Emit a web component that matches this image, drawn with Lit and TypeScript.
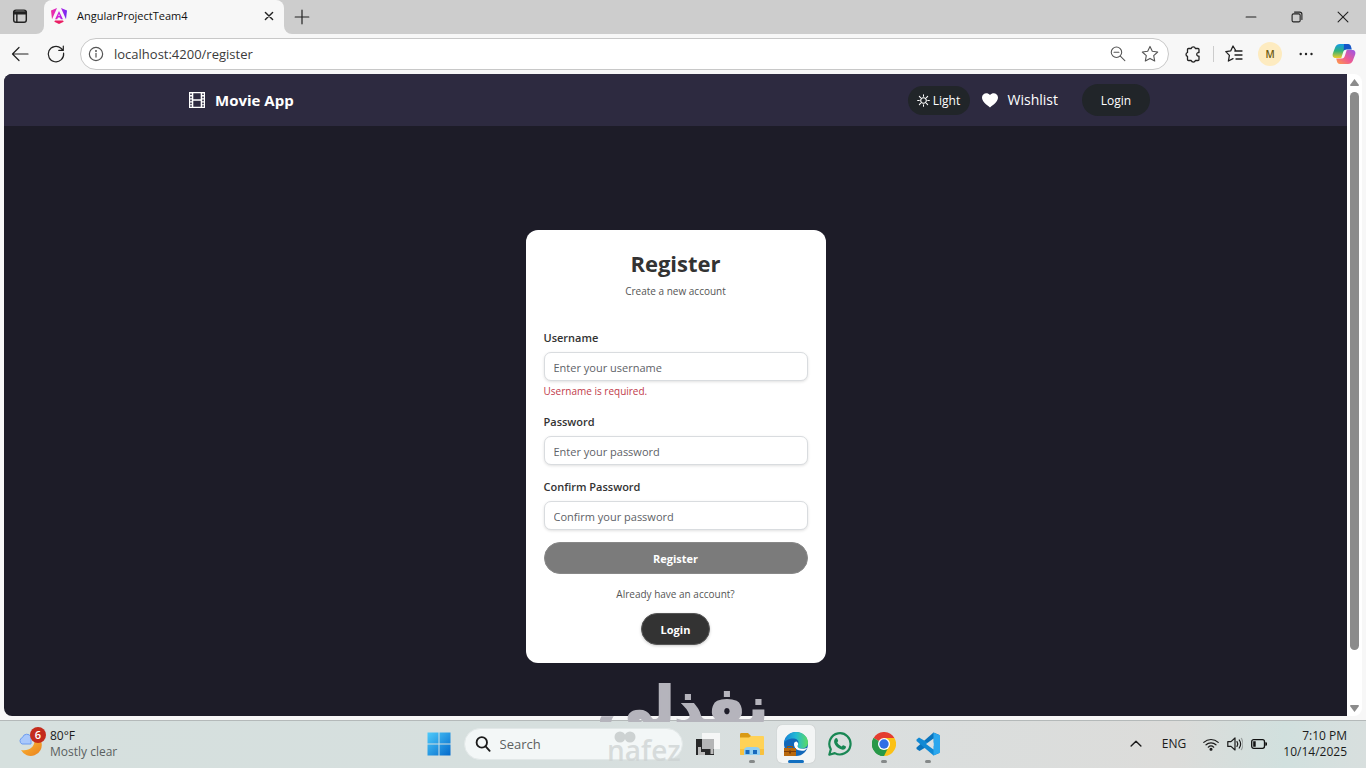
import { LitElement, html, css, svg } from "lit";
import { customElement } from "lit/decorators.js";

const stroke = (size: number, body: unknown, width = 1.2) => html`<svg
  width=${size} height=${size} viewBox="0 0 20 20" fill="none" stroke="currentColor"
  stroke-width=${width} stroke-linecap="round" stroke-linejoin="round" aria-hidden="true">${body}</svg>`;

const tabsIcon = stroke(18, svg`<rect x="3" y="3.5" width="14" height="13.5" rx="2.5"/><path d="M3 5.5h14v2H3z" fill="currentColor"/><path d="M6.5 7.5V17"/>`, 1.6);
const closeIcon = stroke(12, svg`<path d="M4 4l12 12M16 4L4 16"/>`, 2.4);
const plusIcon = stroke(16, svg`<path d="M10 1.5v17M1.5 10h17"/>`, 1.5);
const minIcon = stroke(14, svg`<path d="M3 10h14"/>`, 1.5);
const restoreIcon = stroke(14, svg`<rect x="3" y="5.5" width="11.5" height="11.5" rx="2"/><path d="M6.5 3h7.5a3 3 0 0 1 3 3v7.5"/>`, 1.6);
const winCloseIcon = stroke(14, svg`<path d="M3 3l14 14M17 3L3 17"/>`, 1.6);
const backIcon = stroke(20, svg`<path d="M18 10H2.5M9 3.5L2.5 10 9 16.5"/>`);
const reloadIcon = stroke(20, svg`<path d="M17.6 9.2A7.7 7.7 0 1 1 15 4.3l2 1.9M17.3 2v4.4h-4.5"/>`);
const infoIcon = stroke(16, svg`<circle cx="10" cy="10" r="8.3"/><path d="M10 9.3v4.5"/><circle cx="10" cy="6.4" r=".5" fill="currentColor"/>`, 1.5);
const zoomOutIcon = stroke(18, svg`<circle cx="8.3" cy="8" r="5.8"/><path d="M12.6 12.3l5 5M5.6 8H11"/>`);
const starIcon = stroke(20, svg`<path d="M10 2.4l2.3 4.9 5.4.7-4 3.7 1 5.3-4.7-2.6L5.3 17l1-5.3-4-3.7 5.4-.7z"/>`, 1.1);
const puzzleIcon = stroke(20, svg`<path d="M5.500 4.500h2.700a2.200 2.200 0 0 1 4.200 0h2.600a1 1 0 0 1 1 1v3h-1a1.900 1.900 0 0 0 0 3.600h1V15.500a1 1 0 0 1-1 1h-2.600a2.200 2.200 0 0 1-4.200 0H5.500a1 1 0 0 1-1-1v-3.100a2.100 2.100 0 0 1 0-4V5.500a1 1 0 0 1 1-1z"/>`, 1.3);
const favoritesIcon = stroke(20, svg`<path d="M10.8 7H12L9 2 6.8 6.8l-5 .8 3.6 3.8-1 5.6 4.6-2.4M12 7h6M11 11h7M12 15h6"/>`, 1.3);
const dotsIcon = html`<svg width="16" height="16" viewBox="0 0 16 16" aria-hidden="true"><g fill="#222"><circle cx="2.7" cy="8" r="1.2"/><circle cx="8" cy="8" r="1.2"/><circle cx="13.5" cy="8" r="1.2"/></g></svg>`;

const angularLogo = html`<svg width="16" height="16" viewBox="0 0 16 16" aria-hidden="true">
  <defs><linearGradient id="ng" x1="0" x2="1"><stop offset="0" stop-color="#f0329b"/><stop offset=".5" stop-color="#d01ce0"/><stop offset="1" stop-color="#6a2bf2"/></linearGradient></defs>
  <path d="M0 2.6L6 0 1 11.2zM10 0l6 2.6-1 8.6zM8 3l3.9 8.3H9.8L9 9.5H7l-.8 1.8H4.1zM8 5.7L7.3 8h1.4z" fill="url(#ng)"/>
  <path d="M4 12.4h8l.7 1.3L8 16l-4.7-2.3z" fill="#ea1d63"/></svg>`;

const copilotLogo = html`<svg width="24" height="22" viewBox="0 0 24 22" aria-hidden="true">
  <defs>
    <linearGradient id="ca" x1="0" y1="0" x2="0" y2="1"><stop offset="0" stop-color="#159be8"/><stop offset=".5" stop-color="#31b279"/><stop offset="1" stop-color="#f4cb28"/></linearGradient>
    <linearGradient id="cb" x1="1" y1="0" x2="0" y2="1"><stop offset="0" stop-color="#9a55e8"/><stop offset=".55" stop-color="#ef5b91"/><stop offset="1" stop-color="#ffa144"/></linearGradient>
  </defs>
  <path d="M8 1h8.500L14 6.500c-1.500 0-2.300 1-2.800 2.500L9.300 15H4C1 15 0 13 1 10l2.300-6C4.200 2 5.800 1 8 1z" fill="url(#ca)"/>
  <path d="M12 1h4c1.800 0 2.600 1 3 2.500l.8 3H14c-1 0-1.700.4-2.300 1.200z" fill="#1456c8"/>
  <path d="M16 21H8c-1.800 0-2.600-1-3-2.500L4.200 15.500H10c1.500 0 2.300-1 2.800-2.500l1.900-6H20c3 0 4 2 3 5l-2.300 6c-.9 2-2.500 3-4.700 3z" fill="url(#cb)"/></svg>`;

const filmIcon = html`<svg width="16" height="16" viewBox="0 0 16 16" aria-hidden="true">
  <path fill="#fff" fill-rule="evenodd" d="M0 0h16v16H0zM4.300 1.200v6h7.400v-6zM4.300 8.700v6h7.400v-6zM1.200 1.500v1.600h1.600V1.500zM1.200 4.600v1.600h1.600V4.600zM1.200 7.600v1.600h1.600V7.600zM1.200 10.600v1.600h1.600v-1.600zM1.200 13.200v1.500h1.600v-1.500zM13.200 1.500v1.600h1.600V1.500zM13.200 4.600v1.600h1.600V4.600zM13.200 7.600v1.600h1.600V7.600zM13.200 10.600v1.600h1.600v-1.600zM13.200 13.200v1.500h1.600v-1.500z"/></svg>`;
const sunIcon = stroke(13, svg`<circle cx="10" cy="10" r="4.300"/><path d="M10 1v2.500M10 16.500V19M1 10h2.500M16.500 10H19M3.600 3.600l1.800 1.800M14.600 14.600l1.800 1.800M3.600 16.400l1.800-1.800M14.600 5.400l1.800-1.800"/>`, 1.6);
const heartIcon = html`<svg width="16" height="15" viewBox="0 0 16 15" aria-hidden="true"><path fill="#fff" d="M8 14.500C4.500 11.800 0 8.600 0 4.600 0 .4 5.200-1.300 8 2c2.800-3.300 8-1.600 8 2.600 0 4-4.500 7.200-8 9.900z"/></svg>`;

const weatherIcon = html`<svg width="24" height="24" viewBox="0 0 24 24" aria-hidden="true">
  <defs><linearGradient id="mn" x1="0" y1="0" x2="1" y2="1"><stop offset="0" stop-color="#fdbb35"/><stop offset="1" stop-color="#e9801d"/></linearGradient></defs>
  <path d="M22.500 10.500A11 11 0 0 1 2 18C10 19.500 16 15 15.500 8z" fill="url(#mn)"/>
  <path d="M3 12a3.500 3.500 0 0 1 .5-6.500A4.500 4.500 0 0 1 12 5v7z" fill="#a9c8fb" stroke="#6d9cf0"/></svg>`;
const windowsLogo = html`<svg width="24" height="24" viewBox="0 0 24 24" aria-hidden="true">
  <defs><linearGradient id="wl" x1="0" y1="0" x2="1" y2="1"><stop offset="0" stop-color="#4ecbfb"/><stop offset="1" stop-color="#0369cb"/></linearGradient></defs>
  <path fill="url(#wl)" d="M.5.5h11v11H.5zM12.500.5h11v11h-11zM.5 12.500h11v11H.5zM12.500 12.500h11v11h-11z"/></svg>`;
const searchIcon = stroke(16, svg`<circle cx="8.500" cy="8" r="6.500"/><path d="M13.300 13l5 5.500"/>`, 2.300);
const taskViewIcon = html`<svg width="24" height="24" viewBox="0 0 24 24" aria-hidden="true">
  <path fill="#f5f6f6" d="M6 1h18v16H6z"/><path fill="#272829" d="M0 7h18v16H0z"/><path fill="#b4b5b6" d="M6 7h12v10H6z"/><path stroke="#bbb" stroke-width="3" fill="none" d="M3.500 15v6.500H9M16 17v5"/></svg>`;
const folderIcon = html`<svg width="24" height="24" viewBox="0 0 24 24" aria-hidden="true">
  <path fill="#d99a14" d="M0 2.500C0 1.500.5 1 1.500 1H8l3 3v4H0z"/><path fill="#ffd257" d="M0 5.500h9L11 4h12q1 0 1 1v17q0 1-1 1H1q-1 0-1-1z"/>
  <path fill="#f8c13f" d="M0 17h24v5q0 1-1 1H1q-1 0-1-1z"/><path d="M4 23v-4q0-4 4-4h8q4 0 4 4v4z" fill="#93cff0"/><path fill="#1769bd" d="M5.500 18h4v4h-4zM13 18h4v4h-4z"/></svg>`;
const edgeIcon = html`<svg width="26" height="26" viewBox="0 0 26 26" aria-hidden="true">
  <defs><linearGradient id="ea" x1="0" x2="1"><stop offset="0" stop-color="#1683d8"/><stop offset=".5" stop-color="#22b9d4"/><stop offset="1" stop-color="#5cdb62"/></linearGradient></defs>
  <circle cx="13" cy="13" r="12" fill="#1267b8"/>
  <path fill="url(#ea)" d="M1 13C1 5.500 7 1 13 1c7 0 12 5 12 10.500 0 4-3 6-6.500 6-3 0-4-1.500-4-2.500 0-1 1-1.500 1-3.500 0-2.500-2.500-4-5.500-4C5.500 7.500 1 10 1 13z"/>
  <path fill="#fff" d="M11 13c0-1.500 1-2.500 2.500-2.500 2 1 2 3 1 4.500 0 2 3 4 9 2l.5.500-2.500 2c-6 1-10.500-1.500-10.500-6.500z"/>
  <path fill="#b8680e" d="M1 17h12v8H1z"/><path fill="#7c3d08" d="M1 20h12v1H1zM6 19.500h2v3H6z"/><path d="M4.500 17v-1.500h5V17" fill="none" stroke="#985209"/></svg>`;
const whatsappIcon = html`<svg width="24" height="24" viewBox="0 0 24 24" fill="none" aria-hidden="true">
  <path d="M1.300 22.700l1.500-5.500a10.600 10.600 0 1 1 4 3.900z" stroke="#198754" stroke-width="2.200" stroke-linejoin="round"/>
  <path fill="#198754" d="M7.300 6.500c.6-.7 1.500-.8 1.900 0l.9 2.100c.3.900-.8 1.500-.8 2 .8 1.700 2.300 3 4.200 3.800.5 0 1.200-1.500 1.900-1.200l2.200 1.100c.8.500.3 2-.6 2.700-1.500 1.200-3.800.700-5.800-.4-2.200-1.200-4.100-3.400-4.800-5.300-.6-1.900-.3-3.600.9-4.800z"/></svg>`;
const chromeIcon = html`<svg width="24" height="24" viewBox="0 0 24 24" aria-hidden="true">
  <path fill="#e43d30" d="M12 12L1.600 6A12 12 0 0 1 22.400 6z"/><path fill="#fbc116" d="M12 12l10.400-6A12 12 0 0 1 12 24z"/><path fill="#279847" d="M12 12v12A12 12 0 0 1 1.600 6z"/>
  <path fill="#fbc116" d="M22.400 6H12l5 9-5 9z"/><path fill="#279847" d="M1.600 6L7 15l5 2.500 3.500-.5L12 24A12 12 0 0 1 1.600 6z"/>
  <circle cx="12" cy="12" r="6" fill="#fff"/><circle cx="12" cy="12" r="4.700" fill="#326fe6"/></svg>`;
const vscodeIcon = html`<svg width="24" height="24" viewBox="0 0 24 24" aria-hidden="true">
  <path fill="#0a74bd" d="M17.500.5L23.500 3v4L3.500 19 .5 17V15.500L17.500.5z"/><path fill="#1189d4" d="M.5 7.500l2.500-2 20.500 12V21l-6 2.500L.5 9z"/><path fill="#2ba7ee" d="M17.500.5l6.500 3v17l-6.500 3z"/><path fill="#dbe1e3" d="M17.500 6.500v11L10 12z"/></svg>`;

const chevronIcon = stroke(14, svg`<path d="M3 13l7-7 7 7"/>`, 2);
const wifiIcon = stroke(16, svg`<path d="M1 8a13 13 0 0 1 18 0M3.800 11a9 9 0 0 1 12.400 0M6.600 14a5 5 0 0 1 6.800 0"/><circle cx="10" cy="16.500" r="1.200" fill="currentColor"/>`, 1.500);
const soundIcon = stroke(16, svg`<path d="M1 7h4l5-4.500v15L5 13H1zM12.500 7q2 3 0 6M15.300 5q3.500 5 0 10"/><path d="M18 3q4 7 0 14" opacity=".3"/>`, 1.500);
const batteryIcon = html`<svg width="16" height="10" viewBox="0 0 16 10" aria-hidden="true"><rect x=".7" y=".7" width="12.800" height="8.600" rx="2" fill="none" stroke="#111" stroke-width="1.300"/><path fill="#111" d="M2.200 2.200h2.500v5.600H2.200zM14.300 3.300H15q1 0 1 1v1.400q0 1-1 1h-.7z"/></svg>`;

@customElement("browser-chrome")
class BrowserChrome extends LitElement {
  static styles = css`
    :host { display: block; font: 12px/16px "Open Sans", "Noto Sans", sans-serif; color: #222; }
    button { border: 0; padding: 0; background: none; color: inherit; font: inherit; display: grid; place-items: center; }
    svg { display: block; }
    .tabs { display: flex; height: 34px; background: #f7f7f7; }
    .switcher { width: 44px; background: #cdcdcd; border-bottom-right-radius: 8px; padding: 0 4px 2px 0; }
    .strip { flex: 1; background: #cdcdcd; border-bottom-left-radius: 8px; display: flex; align-items: center; }
    .corner { background: #cdcdcd; display: flex; }
    .tab { width: 240px; box-sizing: border-box; padding: 0 9px 2px 7px; background: #f7f7f7; border-radius: 8px 8px 0 0; display: flex; align-items: center; gap: 10px; }
    .title { flex: 1; font-size: 11px; color: #111; }
    .new { width: 36px; height: 30px; }
    .controls { margin-left: auto; display: flex; }
    .controls button { width: 46px; height: 34px; }
    .bar { display: flex; align-items: center; height: 40px; background: #f7f7f7; box-sizing: border-box; padding: 0 10px; }
    .nav { display: flex; gap: 16px; margin-right: 14px; }
    .address { flex: 1; display: flex; align-items: center; height: 32px; box-sizing: border-box; border: 1px solid #c8c8c8; border-radius: 16px; background: #fff; padding: 0 8px 0 7px; gap: 10px; color: #555; }
    .address button:last-child { margin-left: 3px; }
    .url { flex: 1; min-width: 0; border: 0; outline: 0; background: none; font: 13px/20px "Open Sans", sans-serif; color: #3b3b3b; padding: 0; }
    .tools { display: flex; align-items: center; margin-left: 14px; }
    .tools button { width: 20px; height: 24px; }
    .rule { width: 1px; height: 16px; background: #ccc; margin: 0 10px; }
    .tools .avatar { width: 24px; border-radius: 50%; background: #fdebc0; color: #6b5a10; font-size: 10px; font-weight: 600; margin: 0 14px; }
    .tools .copilot { width: 24px; margin-left: 16px; }
  `;
  render() {
    return html`
      <div class="tabs">
        <button class="switcher" aria-label="Tab actions">${tabsIcon}</button>
        <div class="corner"><div class="tab">${angularLogo}<span class="title">AngularProjectTeam4</span><button aria-label="Close tab">${closeIcon}</button></div></div>
        <div class="strip">
          <button class="new" aria-label="New tab">${plusIcon}</button>
          <div class="controls">
            <button aria-label="Minimize">${minIcon}</button><button aria-label="Restore">${restoreIcon}</button><button aria-label="Close">${winCloseIcon}</button>
          </div>
        </div>
      </div>
      <div class="bar">
        <div class="nav"><button aria-label="Back">${backIcon}</button><button aria-label="Reload">${reloadIcon}</button></div>
        <div class="address">${infoIcon}<input class="url" aria-label="Address" .value=${"localhost:4200/register"} />
          <button aria-label="Zoom out">${zoomOutIcon}</button><button aria-label="Add to favorites">${starIcon}</button></div>
        <div class="tools">
          <button aria-label="Extensions">${puzzleIcon}</button><span class="rule"></span>
          <button aria-label="Favorites">${favoritesIcon}</button><button class="avatar" aria-label="Profile">M</button>
          <button aria-label="Settings and more">${dotsIcon}</button><button class="copilot" aria-label="Copilot">${copilotLogo}</button>
        </div>
      </div>`;
  }
}

@customElement("register-page")
class RegisterPage extends LitElement {
  static styles = css`
    :host { display: flex; min-height: 0; font: 12px/18px "Open Sans", "Noto Sans", sans-serif; background: #f7f7f7; padding: 0 4px 4px; }
    svg { display: block; }
    .page { flex: 1; background: #1d1c28; border-radius: 8px 0 0 8px; overflow: hidden; }
    .top { background: #2d2a40; height: 52px; box-sizing: border-box; padding-right: 12px; }
    .inner { max-width: 961px; height: 100%; margin: 0 auto; display: flex; align-items: center; color: #fff; }
    a { color: inherit; text-decoration: none; }
    .brand { display: flex; align-items: center; gap: 10px; font-size: 15px; font-weight: 700; margin-right: auto; }
    .theme, .signin { border: 0; background: #212529; color: #fff; font: 12px/18px "Open Sans", sans-serif; border-radius: 16px; display: flex; align-items: center; justify-content: center; gap: 3px; padding: 1px 0 0; }
    .theme { width: 62px; height: 29px; }
    .signin { width: 68px; height: 32px; }
    .wish { display: flex; align-items: center; gap: 10px; font-size: 14px; margin: 0 24px 0 12px; }
    .main { display: flex; justify-content: center; padding: 104px 16px; }
    .card { width: 300px; box-sizing: border-box; background: #fff; border-radius: 12px; padding: 18px; display: flex; flex-direction: column; align-items: center; color: #333; }
    h1 { font-size: 22px; line-height: 30px; margin: 0 0 5px; }
    .small { font-size: 10px; line-height: 16px; margin: 0; color: #555; }
    form { align-self: stretch; display: flex; flex-direction: column; gap: 12px; margin: 30px 0 12px; }
    .fields { display: flex; flex-direction: column; gap: 13px; }
    .field { display: flex; flex-direction: column; }
    label { font-size: 11px; font-weight: 600; margin-bottom: 5px; }
    input { height: 29px; box-sizing: border-box; border: 1px solid #d9dcdf; border-radius: 7px; padding: 1px 9px 0; font: 11px/18px "Open Sans", sans-serif; box-shadow: 0 1px 3px rgba(0, 0, 0, 0.12); background: #fff; color: #333; }
    input::placeholder { color: #5e6267; opacity: 1; }
    .error { color: #c13a4a; font-size: 10px; line-height: 17px; margin-top: 2px; }
    .submit, .login { height: 32px; border: 1px solid #888; border-radius: 16px; padding: 1px 0 0; color: #fff; font: 700 11px/18px "Open Sans", sans-serif; }
    .submit { background: #7b7b7b; }
    .login { width: 69px; margin-top: 11px; background: #333; border-color: #555; box-shadow: 0 1px 3px rgba(0, 0, 0, 0.2); }
    .scroll { width: 15px; background: #fff; border-radius: 0 8px 8px 0; display: flex; flex-direction: column; align-items: center; gap: 6px; padding: 5px 0 4px; box-sizing: border-box; }
    .track { flex: 1; width: 9px; }
    .thumb { height: 92%; border-radius: 5px; background: #8b8b8b; }
  `;
  private field(id: string, label: string, hint: string, type: string, error = "") {
    return html`<div class="field"><label for=${id}>${label}</label><input id=${id} type=${type} placeholder=${hint} />
      ${error ? html`<span class="error">${error}</span>` : ""}</div>`;
  }
  render() {
    return html`
      <div class="page">
        <header class="top"><div class="inner">
          <a class="brand" href="#">${filmIcon}Movie App</a>
          <button class="theme">${sunIcon}Light</button>
          <a class="wish" href="#">${heartIcon}Wishlist</a>
          <button class="signin">Login</button>
        </div></header>
        <main class="main"><section class="card">
          <h1>Register</h1>
          <p class="small">Create a new account</p>
          <form>
            <div class="fields">
              ${this.field("user", "Username", "Enter your username", "text", "Username is required.")}
              ${this.field("pass", "Password", "Enter your password", "password")}
              ${this.field("confirm", "Confirm Password", "Confirm your password", "password")}
            </div>
            <button class="submit" type="button" disabled>Register</button>
          </form>
          <p class="small">Already have an account?</p>
          <button class="login">Login</button>
        </section></main>
      </div>
      <div class="scroll" aria-hidden="true">
        <svg width="9" height="7" viewBox="0 0 9 7"><path fill="#8b8b8b" d="M4.500 0L9 6q0 1-1 1H1Q0 7 0 6z"/></svg>
        <div class="track"><div class="thumb"></div></div>
        <svg width="9" height="7" viewBox="0 0 9 7"><path fill="#8b8b8b" d="M4.500 7L0 1q0-1 1-1h7q1 0 1 1z"/></svg>
      </div>`;
  }
}

@customElement("task-bar")
class TaskBar extends LitElement {
  static styles = css`
    :host { display: grid; grid-template-columns: 1fr auto 1fr; align-items: center; height: 48px; box-sizing: border-box; padding-bottom: 2px; border-top: 1px solid #b4b9b9; background: linear-gradient(90deg, #d6e0de 0%, #d6dfde 42%, #dadfdf 60%, #dcdcda 86%, #d1e0de 94%, #d8dfde 100%); font: 12px/16px "Open Sans", "Noto Sans", sans-serif; color: #1b1b1b; }
    svg { display: block; }
    button { border: 0; padding: 0; background: none; color: inherit; font: inherit; }
    .weather { justify-self: start; display: flex; align-items: center; gap: 7px; padding-left: 19px; text-align: left; }
    .pic { position: relative; }
    .badge { position: absolute; left: 11px; top: -5px; width: 16px; height: 16px; border-radius: 50%; background: #c42b1c; color: #fff; font-size: 11px; font-weight: 600; text-align: center; }
    .text { display: block; }
    .muted { color: #5a6060; }
    .apps { display: flex; align-items: center; }
    .app { position: relative; width: 38px; height: 38px; display: grid; place-items: center; margin: 0 3px; border-radius: 5px; }
    .active { background: #f3f5f5; box-shadow: 0 0 1px #aaa; }
    .app::after { content: ""; position: absolute; bottom: 0; width: 6px; height: 3px; border-radius: 2px; background: transparent; }
    .open::after { background: #858989; }
    .active::after { width: 16px; background: #126fc0; }
    .search { width: 219px; height: 32px; box-sizing: border-box; border: 1px solid #e2e8e8; border-radius: 16px; background: #f3f7f7; display: flex; align-items: center; gap: 9px; padding: 0 10px; margin: 0 3px; }
    .query { width: 100px; min-width: 0; border: 0; outline: 0; background: none; padding: 0; font: 13px/18px "Open Sans", sans-serif; }
    .query::placeholder { color: #5c6060; opacity: 1; }
    .tray { justify-self: end; display: flex; align-items: center; padding-right: 19px; }
    .lang { margin: 0 17px 0 19px; }
    .status { display: flex; align-items: center; gap: 8px; margin-right: 16px; }
    .clock { text-align: right; }
  `;
  render() {
    return html`
      <button class="weather"><span class="pic">${weatherIcon}<span class="badge">6</span></span>
        <span><span class="text">80°F</span><span class="text muted">Mostly clear</span></span></button>
      <div class="apps">
        <button class="app" aria-label="Start">${windowsLogo}</button>
        <div class="search">${searchIcon}<input class="query" aria-label="Search" placeholder="Search" /></div>
        <button class="app" aria-label="Task view">${taskViewIcon}</button>
        <button class="app open" aria-label="File Explorer">${folderIcon}</button>
        <button class="app active" aria-label="Edge">${edgeIcon}</button>
        <button class="app" aria-label="WhatsApp">${whatsappIcon}</button>
        <button class="app open" aria-label="Chrome">${chromeIcon}</button>
        <button class="app open" aria-label="Visual Studio Code">${vscodeIcon}</button>
      </div>
      <div class="tray">
        <button aria-label="Hidden icons">${chevronIcon}</button><span class="lang">ENG</span>
        <span class="status">${wifiIcon}${soundIcon}${batteryIcon}</span>
        <span class="clock"><span class="text">7:10 PM</span><span class="text">10/14/2025</span></span>
      </div>`;
  }
}

@customElement("app-root")
class AppRoot extends LitElement {
  static styles = css`
    :host { display: flex; flex-direction: column; height: 100vh; min-width: 960px; overflow: hidden; position: relative; }
    register-page { flex: 1; }
    .mark { position: absolute; left: 50%; bottom: 46px; width: 168px; height: 42px; margin-left: -83px; overflow: hidden; pointer-events: none; text-align: center; white-space: nowrap; font: 700 56px/56px "DejaVu Sans", sans-serif; color: #b5b4bc; -webkit-text-stroke: 2px #b5b4bc; }
    .latin { position: absolute; left: 50%; bottom: 4px; margin-left: -76px; pointer-events: none; font: 600 28px/28px "Open Sans", sans-serif; color: rgba(205, 210, 210, 0.75); }
    .dots { position: absolute; left: 6px; top: -5px; display: block; }
  `;
  render() {
    return html`<browser-chrome></browser-chrome><register-page></register-page><task-bar></task-bar>
      <div class="mark" lang="ar" dir="rtl">نفذلي</div>
      <div class="latin"><svg class="dots" width="24" height="12" viewBox="0 0 24 12" fill="#cdd2d2" aria-hidden="true"><circle cx="7" cy="6" r="5.500"/><circle cx="17" cy="6" r="5.500"/></svg>nafez</div>`;
  }
}
